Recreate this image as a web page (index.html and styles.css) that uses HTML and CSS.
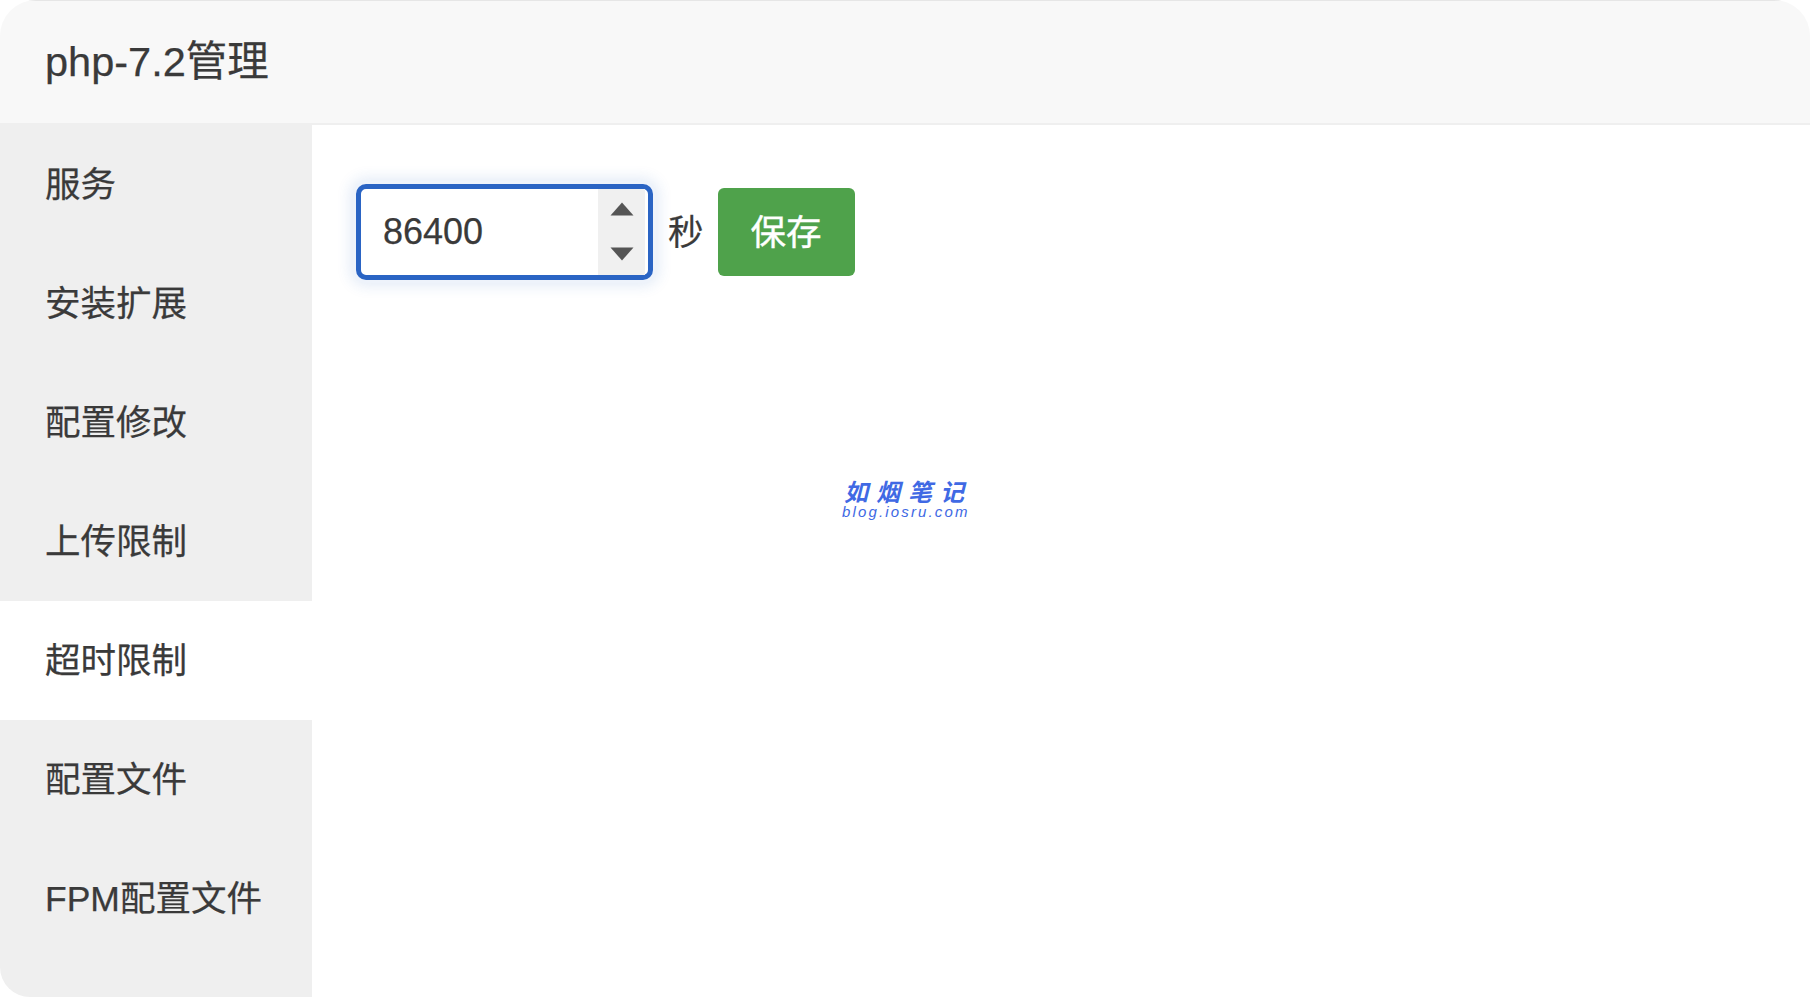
FILE: index.html
```html
<!DOCTYPE html>
<html lang="zh-CN">
<head>
<meta charset="utf-8">
<title>php-7.2管理</title>
<link rel="stylesheet" href="styles.css">
</head>
<body>
<div class="panel">
  <header class="title">php-7.2管理</header>
  <div class="body">
    <nav class="side">
      <div class="item">服务</div>
      <div class="item">安装扩展</div>
      <div class="item">配置修改</div>
      <div class="item">上传限制</div>
      <div class="item active">超时限制</div>
      <div class="item">配置文件</div>
      <div class="item">FPM配置文件</div>
    </nav>
    <main class="content">
      <div class="form">
        <div class="field">
          <span class="value">86400</span>
          <span class="spin">
            <svg class="arrow" width="24" height="14" viewBox="0 0 24 14"><path d="M12 0.5 L23.5 13.5 H0.5 Z"/></svg>
            <svg class="arrow" width="24" height="14" viewBox="0 0 24 14"><path d="M0.5 0.5 H23.5 L12 13.5 Z"/></svg>
          </span>
        </div>
        <span class="unit">秒</span>
        <button class="save">保存</button>
      </div>
      <div class="mark">
        <div class="mark-cn">如烟笔记</div>
        <div class="mark-en">blog.iosru.com</div>
      </div>
    </main>
  </div>
</div>
</body>
</html>
```
FILE: styles.css
```css
* { box-sizing: border-box; }
html, body { margin: 0; padding: 0; background: #fff; }
body {
  width: 1810px;
  height: 998px;
  overflow: hidden;
  font-family: "Liberation Sans", "Noto Sans CJK SC", sans-serif;
  color: #3a3a3a;
  -webkit-text-stroke: 0.25px currentColor;
}
.panel {
  height: 997px;
  display: flex;
  flex-direction: column;
  border-radius: 36px 36px 0 30px;
  overflow: hidden;
  background: #fff;
}
.title {
  height: 125px;
  flex: none;
  padding: 0 45px 8px;
  display: flex;
  align-items: center;
  font-size: 41.5px;
  background: #f8f8f8;
  border-top: 1px solid #e6e6e6;
  border-bottom: 2px solid #efefef;
}
.body { flex: 1; display: flex; min-height: 0; }
.side {
  width: 312px;
  flex: none;
  background: #efefef;
}
.item {
  height: 119px;
  padding: 0 0 6px 45px;
  display: flex;
  align-items: center;
  font-size: 35.5px;
}
.item.active { background: #fff; }
.content {
  flex: 1;
  position: relative;
  padding: 59px 0 0 44px;
}
.form { display: flex; align-items: center; }
.field {
  width: 297px;
  height: 96px;
  display: flex;
  align-items: stretch;
  background: #fff;
  border: 5px solid #2a64c4;
  border-radius: 10px;
  box-shadow: 0 0 0 3px #eef3fb, 0 0 14px 6px rgba(42, 100, 196, 0.13);
}
.value {
  flex: 1;
  display: flex;
  align-items: center;
  padding-left: 22px;
  font-size: 36px;
}
.spin {
  width: 47px;
  margin-right: 3px;
  display: flex;
  flex-direction: column;
  align-items: center;
  justify-content: space-between;
  padding: 13px 0 14px;
  background: #f0f0f0;
}
.arrow { display: block; fill: #555; }
.unit { margin: 0 0 6px 15px; font-size: 35.5px; }
.save {
  width: 137px;
  height: 88px;
  margin-left: 14px;
  padding: 0 0 5px;
  border: 0;
  border-radius: 6px;
  background: #4fa24b;
  color: #fff;
  font-family: inherit;
  font-size: 35.5px;
  -webkit-text-stroke: 0.4px #fff;
}
.mark {
  position: absolute;
  left: 530px;
  top: 355px;
  width: 126px;
  color: #4069e4;
  text-align: center;
  font-style: italic;
  -webkit-text-stroke: 0;
}
.mark-cn { font-size: 24px; line-height: 26px; font-weight: 700; letter-spacing: 8px; margin-right: -6px; white-space: nowrap; }
.mark-en { font-size: 15px; line-height: 11px; letter-spacing: 2.15px; white-space: nowrap; }
```
